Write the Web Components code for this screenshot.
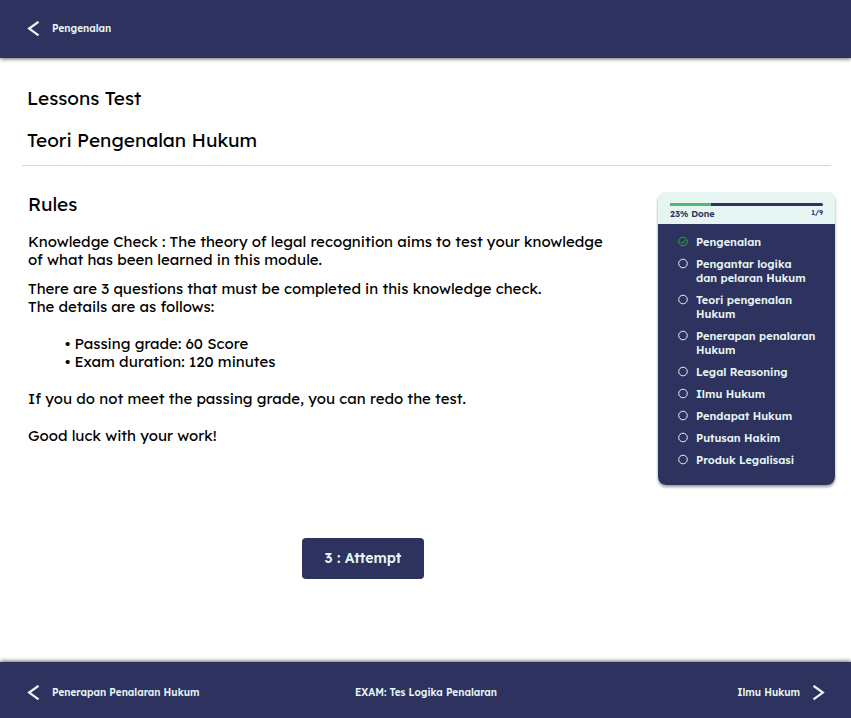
<!DOCTYPE html>
<html lang="id">
<head>
<meta charset="utf-8">
<meta name="viewport" content="width=device-width, initial-scale=1">
<title>Lessons Test</title>
<style>
  :root { --navy: #2d325f; --mint: #e6f5f2; }
  body { margin: 0; background: #fff; color: #000; font-family: "Lexend", "Lexend Deca", "Inter", "Noto Sans", sans-serif; }
</style>
</head>
<body>
<lesson-page></lesson-page>
<script>
const define = (name, html) => {
  const template = document.createElement('template');
  template.innerHTML = html;
  customElements.define(name, class extends HTMLElement {
    constructor() {
      super();
      this.attachShadow({ mode: 'open' }).append(template.content.cloneNode(true));
    }
  });
};

define('nav-link', `
  <style>
    :host { display: block; }
    a { display: flex; align-items: center; gap: 12px; color: var(--mint); text-decoration: none; font-size: 10px; line-height: 16px; font-weight: 600; }
    :host([next]) a { flex-direction: row-reverse; }
    :host([next]) svg { transform: scaleX(-1); }
    svg { width: 13px; height: 16px; flex: none; }
  </style>
  <a href="#"><svg viewBox="0 0 13 16" fill="none" stroke="currentColor" stroke-width="2.300" aria-hidden="true"><path d="M11.500 .8 2.200 7.600l9.300 6.800"/></svg><span><slot></slot></span></a>
`);

define('top-bar', `
  <style>
    :host { display: block; background: var(--navy); box-shadow: 0 1px 4px rgba(0,0,0,.6); }
    nav { display: flex; align-items: center; padding: 21px 27px; }
  </style>
  <nav aria-label="Kembali"><nav-link><slot></slot></nav-link></nav>
`);

define('bottom-bar', `
  <style>
    :host { display: block; background: var(--navy); box-shadow: 0 -1px 4px rgba(0,0,0,.6); color: var(--mint); }
    nav { display: grid; grid-template-columns: 1fr auto 1fr; align-items: center; padding: 23px 26px 17px 27px; }
    ::slotted([slot=current]) { font-size: 10px; line-height: 16px; font-weight: 600; }
    ::slotted([slot=next]) { justify-self: end; }
    ::slotted([slot=prev]) { justify-self: start; }
  </style>
  <nav aria-label="Pelajaran"><slot name="prev"></slot><slot name="current"></slot><slot name="next"></slot></nav>
`);

define('page-title', `
  <style>
    :host { display: block; margin: 0 20px 0 22px; padding: 0 5px 11px; border-bottom: 1px solid #d3d5d6; }
    h1, h2 { margin: 0; font-size: 19px; line-height: 28px; font-weight: 380; }
    h2 { margin-top: 14px; }
  </style>
  <h1><slot name="kind"></slot></h1>
  <h2><slot></slot></h2>
`);

define('test-rules', `
  <style>
    :host { display: block; font-size: 15px; line-height: 18px; font-weight: 370; }
    h2 { margin: 0 0 15px; font-size: 19px; line-height: 28px; font-weight: 380; }
    p { margin: 0 0 19px; }
    p.lead { margin-bottom: 11px; }
    ul { margin: 0 0 19px; padding: 0 0 0 37px; list-style: none; }
    li::before { content: "• "; }
  </style>
  <h2>Rules</h2>
  <p class="lead">Knowledge Check : The theory of legal recognition aims to test your knowledge<br>of what has been learned in this module.</p>
  <p>There are 3 questions that must be completed in this knowledge check.<br>The details are as follows:</p>
  <ul><li>Passing grade: 60 Score</li><li>Exam duration: 120 minutes</li></ul>
  <p>If you do not meet the passing grade, you can redo the test.</p>
  <p>Good luck with your work!</p>
`);

define('attempt-button', `
  <style>
    :host { display: flex; justify-content: center; }
    button { font-family: inherit; font-size: 14px; line-height: 20px; font-weight: 600; color: var(--mint); background: var(--navy); border: 0; border-radius: 4px; padding: 10px 23px 11px; cursor: pointer; }
  </style>
  <button type="button"><slot></slot></button>
`);

define('lesson-item', `
  <style>
    :host { display: flex; gap: 8px; font-size: 11px; line-height: 14px; font-weight: 600; color: var(--mint); }
    svg { width: 10px; height: 14px; flex: none; fill: none; stroke: currentColor; stroke-width: 1; }
    path { display: none; }
    :host([done]) svg { color: #0fc414; }
    :host([done]) path { display: block; }
    a { color: inherit; text-decoration: none; }
  </style>
  <svg viewBox="0 0 10 14" aria-hidden="true"><circle cx="5" cy="6.500" r="4.300"/><path d="m2.700 6.700 1.700 1.700 3.100-3.500"/></svg>
  <a href="#"><slot></slot></a>
`);

define('lesson-progress', `
  <style>
    :host { display: block; border-radius: 8px; background: linear-gradient(var(--mint) 24px, var(--navy) 24px); box-shadow: 0 2px 3px rgba(0,0,0,.4); overflow: hidden; color: var(--navy); }
    header { background: var(--mint); padding: 11px 12px 3px; }
    .bar { height: 3px; border-radius: 2px; background: var(--navy); overflow: hidden; }
    .bar i { display: block; height: 100%; width: 27%; background: #4bbd70; }
    .meta { display: flex; justify-content: space-between; padding-top: 1px; font-weight: 600; font-size: 9px; line-height: 14px; }
    .count { font-size: 7px; line-height: 12px; }
    .list { display: grid; gap: 8px; padding: 11px 12px 18px 20px; }
  </style>
  <header>
    <div class="bar" role="progressbar" aria-valuenow="23" aria-valuemin="0" aria-valuemax="100" aria-label="Progress"><i></i></div>
    <div class="meta"><span><slot name="done"></slot></span><span class="count"><slot name="count"></slot></span></div>
  </header>
  <div class="list"><slot></slot></div>
`);

define('lesson-page', `
  <style>
    :host { display: flex; flex-direction: column; min-height: 100vh; }
    main { flex: 1; padding: 26px 0 20px; }
    .columns { display: grid; grid-template-columns: minmax(0, 1fr) 177px; gap: 16px; align-items: start; padding: 0 16px 0 28px; margin-top: 24px; }
    lesson-progress { margin-top: 2px; }
    attempt-button { margin-top: 93px; padding-left: 56px; }
  </style>
  <top-bar>Pengenalan</top-bar>
  <main>
    <page-title><span slot="kind">Lessons Test</span>Teori Pengenalan Hukum</page-title>
    <div class="columns">
      <section><test-rules></test-rules><attempt-button>3 : Attempt</attempt-button></section>
      <lesson-progress>
        <span slot="done">23% Done</span><span slot="count">1/9</span>
        <lesson-item done>Pengenalan</lesson-item>
        <lesson-item>Pengantar logika<br>dan pelaran Hukum</lesson-item>
        <lesson-item>Teori pengenalan<br>Hukum</lesson-item>
        <lesson-item>Penerapan penalaran<br>Hukum</lesson-item>
        <lesson-item>Legal Reasoning</lesson-item>
        <lesson-item>Ilmu Hukum</lesson-item>
        <lesson-item>Pendapat Hukum</lesson-item>
        <lesson-item>Putusan Hakim</lesson-item>
        <lesson-item>Produk Legalisasi</lesson-item>
      </lesson-progress>
    </div>
  </main>
  <bottom-bar>
    <nav-link slot="prev">Penerapan Penalaran Hukum</nav-link>
    <span slot="current">EXAM: Tes Logika Penalaran</span>
    <nav-link slot="next" next>Ilmu Hukum</nav-link>
  </bottom-bar>
`);
</script>
</body>
</html>
